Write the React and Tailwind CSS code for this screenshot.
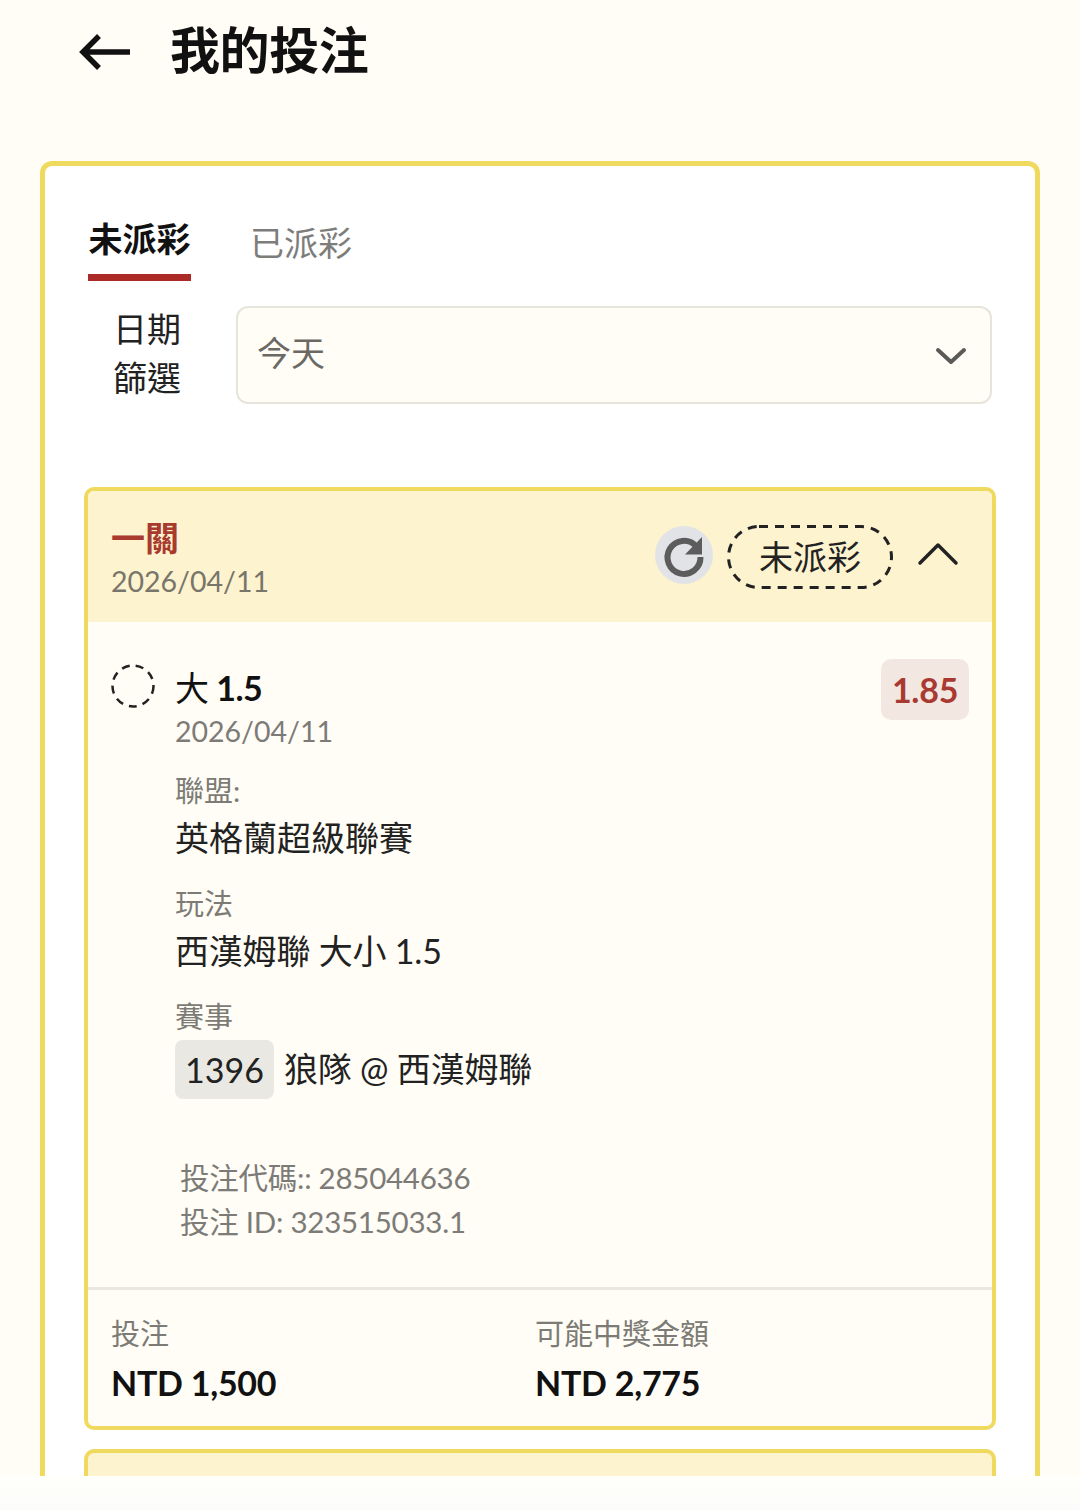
const fontStack = "font-['Lato','Noto_Sans_CJK_TC',sans-serif]";

const Tabs = () => (
  <div className="flex h-[138px] pl-[43px] pt-[32px]">
    <div className="flex h-[83px] w-[103px] flex-col items-center">
      <div className="h-[76px] pt-[19px] text-[34px] leading-[44px] font-bold whitespace-nowrap text-[#111]">未派彩</div>
      <div className="h-[7px] w-full bg-[#ad2b26]" />
    </div>
    <div className="ml-[59px] pt-[23px] text-[34px] leading-[44px] text-[#7d7d7b]">已派彩</div>
  </div>
);

const DateFilter = () => (
  <div className="flex items-start pl-[68px]">
    <div className="w-[68px] text-center text-[34px] leading-[49px] text-[#222]">
      <div>日期</div>
      <div>篩選</div>
    </div>
    <div className="ml-[55px] mt-[2px] flex h-[98px] w-[756px] items-center justify-between rounded-[12px] border-[2.5px] border-[#e6e5dc] bg-[#fffdf5] pl-[19px] pr-[23px]">
      <span className="-mt-[4px] text-[34px] leading-[44px] text-[#6a6964]">今天</span>
      <svg width="32" height="20" viewBox="0 0 32 20" fill="none" className="mt-[2px]">
        <path d="M3 4 L16 16 L29 4" stroke="#5a5a58" strokeWidth="4" strokeLinecap="round" strokeLinejoin="round" />
      </svg>
    </div>
  </div>
);

const DetailBlock = ({ label, children }) => (
  <div>
    <div className="text-[29px] leading-[40px] text-[#7c7b75]">{label}</div>
    {children}
  </div>
);

const BetHeader = () => (
  <div className="flex h-[131px] items-start justify-between bg-[#fdf3cf] pl-[23px] pr-[32px]">
    <div className="pt-[23px]">
      <div className="text-[34px] leading-[48px] font-bold text-[#a83a2e]">一關</div>
      <div className="mt-[1px] text-[28.5px] leading-[36px] text-[#78766a]">2026/04/11</div>
    </div>
    <div className="flex items-center pt-[34px]">
      <div className="-mt-[4px] flex h-[58px] w-[58px] items-center justify-center rounded-full bg-[#e2e3e6]">
        <svg width="48" height="48" viewBox="0 0 48 48" fill="none">
          <path d="M36 15A16.5 16.5 0 1 0 40.5 26" stroke="#5c5c5c" strokeWidth="6" />
          <path d="M25 23.5 L42 23.5 L42 6 Z" fill="#5c5c5c" />
        </svg>
      </div>
      <div className="relative ml-[14px] flex h-[64px] w-[166px] items-center justify-center text-[34px] leading-[44px] text-[#222]">
        <svg width="166" height="64" viewBox="0 0 166 64" fill="none" className="absolute inset-0">
          <rect x="1.5" y="1.5" width="163" height="61" rx="30.5" stroke="#222" strokeWidth="3" strokeDasharray="9 7" />
        </svg>
        未派彩
      </div>
      <svg width="44" height="26" viewBox="0 0 44 26" fill="none" className="-mt-[6px] ml-[23px]">
        <path d="M4 22 L22 4 L40 22" stroke="#222" strokeWidth="3.5" strokeLinecap="round" strokeLinejoin="round" />
      </svg>
    </div>
  </div>
);

const BetBody = () => (
  <div className="bg-[#fffdf5] pl-[23px] pr-[23px] pt-[37px]">
    <div className="flex items-start">
      <svg width="44" height="44" viewBox="0 0 44 44" fill="none" className="mt-[5px] shrink-0">
        <circle cx="22" cy="22" r="20.5" stroke="#222" strokeWidth="2.5" strokeDasharray="8 6.1" />
      </svg>
      <div className="ml-[20px] flex-1">
        <div className="flex items-start justify-between">
          <div>
            <div className="pt-[7px] text-[34px] leading-[44px] font-bold tracking-[-0.5px] text-[#111]">
              <span className="font-normal">大</span> 1.5
            </div>
            <div className="text-[28.5px] leading-[42px] text-[#7c7b78]">2026/04/11</div>
          </div>
          <div className="flex h-[61px] w-[88px] items-center justify-center rounded-[10px] bg-[#f3e7e1] text-[34px] leading-[44px] font-bold tracking-[-0.25px] text-[#a83a32]">
            1.85
          </div>
        </div>
        <div className="mt-[19px] flex flex-col gap-[22px]">
          <DetailBlock label="聯盟:">
            <div className="mt-[3px] text-[34px] leading-[48px] text-[#222]">英格蘭超級聯賽</div>
          </DetailBlock>
          <DetailBlock label="玩法">
            <div className="mt-[3px] text-[34px] leading-[48px] tracking-[-0.2px] text-[#222]">西漢姆聯 大小 1.5</div>
          </DetailBlock>
          <DetailBlock label="賽事">
            <div className="mt-[3px] flex items-center text-[34px] leading-[48px] text-[#222]">
              <span className="flex h-[59px] w-[99px] items-center justify-center rounded-[8px] bg-[#e9e8e3]">1396</span>
              <span className="ml-[10px] -mt-[2px] tracking-[-0.2px]">狼隊 @ 西漢姆聯</span>
            </div>
          </DetailBlock>
        </div>
      </div>
    </div>
    <div className="mt-[57px] pb-[43px] pl-[69px] text-[29.5px] leading-[44px] tracking-[-0.25px] text-[#7c7b78]">
      <div>投注代碼:: 285044636</div>
      <div>投注 ID: 323515033.1</div>
    </div>
  </div>
);

const BetFooter = () => (
  <div className="grid h-[139px] grid-cols-[424px_1fr] border-t-[3px] border-[#e8e7e0] bg-[#fffdf5] pl-[23px] pt-[22px]">
    <div>
      <div className="text-[29px] leading-[44px] text-[#7c7b75]">投注</div>
      <div className="mt-[5px] text-[34px] leading-[44px] font-bold tracking-[-0.25px] text-[#111]">NTD 1,500</div>
    </div>
    <div>
      <div className="text-[29px] leading-[44px] text-[#7c7b75]">可能中獎金額</div>
      <div className="mt-[5px] text-[34px] leading-[44px] font-bold tracking-[-0.25px] text-[#111]">NTD 2,775</div>
    </div>
  </div>
);

const App = () => {
  return (
    <div className={`relative h-[1510px] w-[1080px] overflow-hidden bg-[#fffdf5] ${fontStack}`}>
      <div className="flex h-[161px] items-start pl-[78px] pt-[21px]">
        <svg width="54" height="40" viewBox="0 0 54 40" fill="none" className="mt-[11px] shrink-0">
          <path d="M52 20 H5 M21 4 L5 20 L21 36" stroke="#111" strokeWidth="5.5" strokeLinejoin="miter" />
        </svg>
        <h1 className="ml-[38px] text-[50px] leading-[58px] font-bold tracking-[-0.4px] text-[#111]">我的投注</h1>
      </div>

      <div className="mx-[40px] h-[1400px] rounded-t-[12px] border-x-[5px] border-t-[5px] border-[#f0d95f] bg-white">
        <Tabs />
        <DateFilter />

        <div className="ml-[39px] mt-[83px] w-[912px] overflow-hidden rounded-[10px] border-[4px] border-[#f0d95f]">
          <BetHeader />
          <BetBody />
          <BetFooter />
        </div>

        <div className="ml-[39px] mt-[19px] h-[120px] w-[912px] rounded-t-[10px] border-x-[4px] border-t-[4px] border-[#f0d95f] bg-[#fdf3cf]" />
      </div>

      {/* fade at the bottom edge of the screen */}
      <div className="absolute bottom-0 left-0 h-[34px] w-full bg-gradient-to-b from-[#fffffb] to-[#fbfbfa]" />
    </div>
  );
};

export default App;
